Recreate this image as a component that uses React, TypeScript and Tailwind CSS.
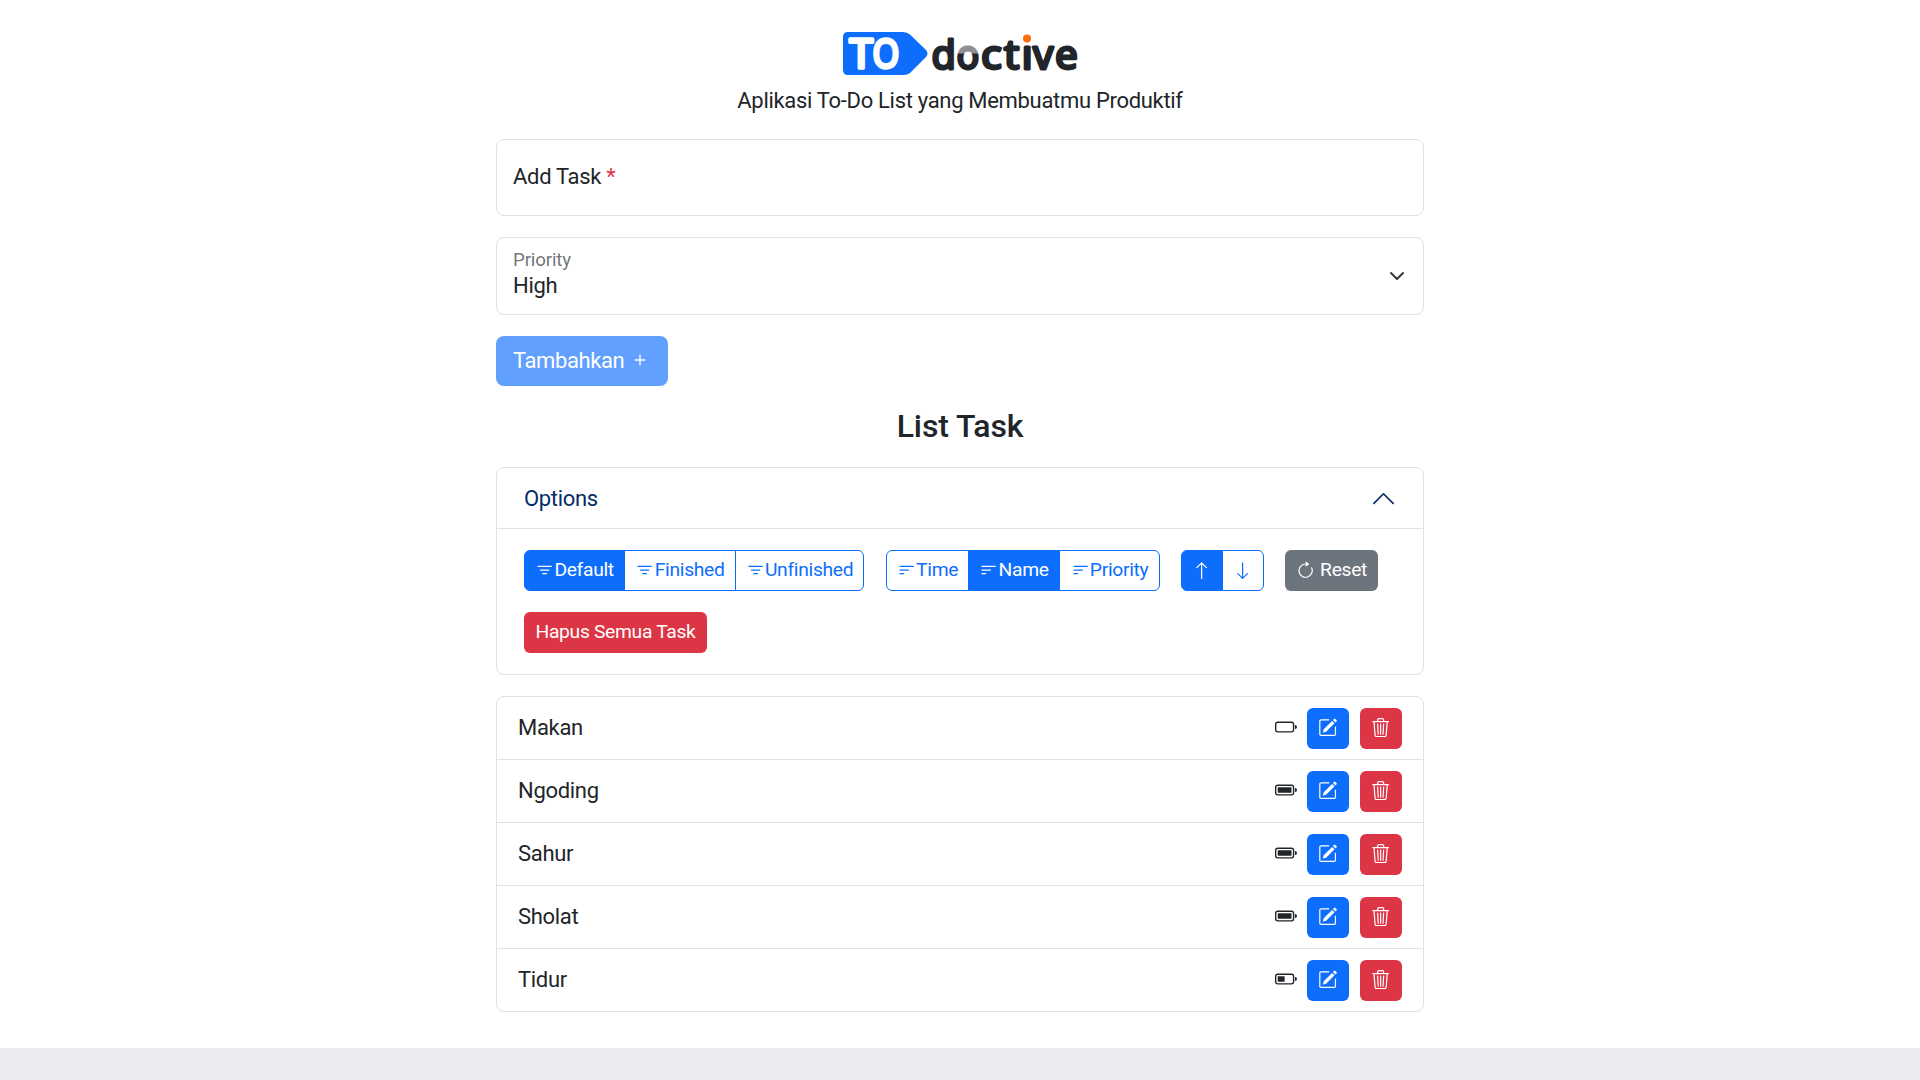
import type { ComponentType, ReactNode } from "react";
import {
  BsArrowClockwise,
  BsArrowDown,
  BsArrowUp,
  BsBattery,
  BsBatteryFull,
  BsBatteryHalf,
  BsFilter,
  BsFilterLeft,
  BsPencilSquare,
  BsPlus,
  BsTrash3,
} from "react-icons/bs";

type Icon = ComponentType<{ className?: string }>;

const tasks: { name: string; battery: Icon }[] = [
  { name: "Makan", battery: BsBattery },
  { name: "Ngoding", battery: BsBatteryFull },
  { name: "Sahur", battery: BsBatteryFull },
  { name: "Sholat", battery: BsBatteryFull },
  { name: "Tidur", battery: BsBatteryHalf },
];

function Logo() {
  return (
    <svg width="236" height="44" viewBox="842 32 236 44" className="block overflow-visible" role="img" aria-label="TOdoctive">
      <defs>
        <linearGradient id="half" gradientUnits="userSpaceOnUse" x1="0" y1="53" x2="0" y2="54">
          <stop offset="0" stopColor="#8d8f91" />
          <stop offset="1" stopColor="#212529" />
        </linearGradient>
      </defs>
      <path
        d="M848 32H903Q907 32 910 34.500L926 50Q929 53.500 926 57L910 73Q907.500 75 904 75H848Q843 75 843 70V37Q843 32 848 32Z"
        fill="#0d6efd"
      />
      <g fontFamily="'Noto Sans', sans-serif" fontWeight="400" strokeLinejoin="round" strokeLinecap="round">
        <g fill="#fff" stroke="#fff" strokeWidth="3.400" fontSize="40.500">
          <text x="849.500" y="68.300" textLength="23" lengthAdjust="spacingAndGlyphs">T</text>
          <text x="872.500" y="68.300" textLength="26.500" lengthAdjust="spacingAndGlyphs">O</text>
        </g>
        <g fill="#212529" stroke="#212529" strokeWidth="2.800" fontSize="39.500">
          <text x="931.500" y="68.500" textLength="24" lengthAdjust="spacingAndGlyphs">d</text>
          <text x="956.500" y="68.500" textLength="22.500" lengthAdjust="spacingAndGlyphs" fill="url(#half)" stroke="url(#half)">o</text>
          <text x="981" y="68.500" textLength="20.500" lengthAdjust="spacingAndGlyphs">c</text>
          <text x="1004" y="68.500" textLength="15" lengthAdjust="spacingAndGlyphs">t</text>
          <text x="1021.500" y="68.500" textLength="11" lengthAdjust="spacingAndGlyphs">ı</text>
          <text x="1033" y="68.500" textLength="20" lengthAdjust="spacingAndGlyphs">v</text>
          <text x="1055" y="68.500" textLength="22.500" lengthAdjust="spacingAndGlyphs">e</text>
        </g>
      </g>
      <circle cx="1027" cy="38.500" r="4" fill="#ff6b0a" />
    </svg>
  );
}

function GroupButton({ active, className, children }: { active?: boolean; className: string; children: ReactNode }) {
  return (
    <button
      className={`-ml-px flex h-[41px] items-center justify-center border border-[#0d6efd] text-[19.25px] tracking-[-0.3px] first:ml-0 first:rounded-l-[6px] last:rounded-r-[6px] ${
        active ? "bg-[#0d6efd] text-white" : "bg-white text-[#0d6efd]"
      } ${className}`}
    >
      {children}
    </button>
  );
}

export default function App() {
  return (
    <div className="flex h-[1080px] flex-col overflow-hidden bg-[#e9ebee] font-['Roboto',sans-serif] text-[22px] leading-[33px] tracking-[-0.31px] text-[#212529]">
      <div className="h-[1048px] bg-white pt-8">
        <main className="mx-auto w-[928px]">
          <header className="flex flex-col items-center">
            <Logo />
            <p className="mt-2">Aplikasi To-Do List yang Membuatmu Produktif</p>
          </header>

          <div className="mt-[22px] flex h-[77px] items-center rounded-[8px] border border-[#dee2e6] px-4 pb-[2px]">
            <span>
              Add Task <span className="text-[#dc3545]">*</span>
            </span>
          </div>

          <div className="mt-[21px] flex h-[78px] items-center justify-between rounded-[8px] border border-[#dee2e6] px-4">
            <div className="mb-[3px]">
              <div className="text-[18.7px] leading-[22px] tracking-[-0.15px] text-[#212529]/65">Priority</div>
              <div className="leading-[30px]">High</div>
            </div>
            <svg viewBox="0 0 16 16" className="mr-[2px] size-4 text-[#343a40]" fill="none" stroke="currentColor" strokeWidth="2" strokeLinecap="round" strokeLinejoin="round">
              <path d="m2 5 6 6 6-6" />
            </svg>
          </div>

          <button className="mt-[21px] flex h-[50px] w-[172px] items-center rounded-[8px] bg-[#61a0fe] pb-[2px] pl-[17px] tracking-[-0.4px] text-white">
            Tambahkan
            <BsPlus className="ml-[5px] size-[22px]" />
          </button>

          <h1 className="mt-[21px] h-[60px] text-center text-[32px] leading-[38px] font-medium tracking-[-0.1px]">List Task</h1>

          <section className="h-[208px] rounded-[8px] border border-[#dee2e6]">
            <div className="flex h-[61px] items-center justify-between border-b border-[#dee2e6] pr-[27px] pl-[27px] text-[#052c65]">
              Options
              <svg viewBox="0 0 16 16" className="-mr-px size-[27px]" fill="none" stroke="currentColor" strokeWidth="1" strokeLinecap="round" strokeLinejoin="round">
                <path d="m2.300 10.900 5.700-5.700 5.700 5.700" />
              </svg>
            </div>
            <div className="flex flex-wrap gap-x-[21px] gap-y-[21px] pt-[21px] pl-[27px]">
              <div className="flex">
                <GroupButton active className="w-[101px]">
                  <BsFilter className="size-[19.25px]" />
                  <span className="pb-[2px]">Default</span>
                </GroupButton>
                <GroupButton className="w-[112px]">
                  <BsFilter className="size-[19.25px]" />
                  <span className="pb-[2px]">Finished</span>
                </GroupButton>
                <GroupButton className="w-[129px]">
                  <BsFilter className="size-[19.25px]" />
                  <span className="pb-[2px]">Unfinished</span>
                </GroupButton>
              </div>
              <div className="ml-[1px] flex">
                <GroupButton className="w-[83px]">
                  <BsFilterLeft className="size-[19.25px]" />
                  <span className="pb-[2px]">Time</span>
                </GroupButton>
                <GroupButton active className="w-[92px]">
                  <BsFilterLeft className="size-[19.25px]" />
                  <span className="pb-[2px]">Name</span>
                </GroupButton>
                <GroupButton className="w-[101px]">
                  <BsFilterLeft className="size-[19.25px]" />
                  <span className="pb-[2px]">Priority</span>
                </GroupButton>
              </div>
              <div className="flex">
                <GroupButton active className="w-[42px]">
                  <BsArrowUp className="size-[19.25px]" />
                </GroupButton>
                <GroupButton className="w-[42px]">
                  <BsArrowDown className="size-[19.25px]" />
                </GroupButton>
              </div>
              <button className="flex h-[41px] w-[93px] items-center justify-center gap-[5px] rounded-[6px] bg-[#6c757d] text-[19.25px] tracking-[-0.3px] text-white">
                <BsArrowClockwise className="size-[19.25px]" />
                <span className="pb-[2px]">Reset</span>
              </button>
              <button className="h-[41px] w-[183px] rounded-[6px] bg-[#dc3545] pb-[2px] text-[19.25px] text-white">
                Hapus Semua Task
              </button>
            </div>
          </section>

          <ul className="mt-[21px] divide-y divide-[#dee2e6] rounded-[8px] border border-[#dee2e6]">
            {tasks.map(({ name, battery: Battery }) => (
              <li key={name} className="flex h-[63px] items-center pr-[21px] pl-[21px] last:h-[62px]">
                <span className="grow pb-[2px]">{name}</span>
                <Battery className="mr-[10px] mb-[3px] size-[22px]" />
                <button className="mr-[11px] flex h-[41px] w-[42px] items-center justify-center rounded-[6px] bg-[#0d6efd] text-white">
                  <BsPencilSquare className="size-[19.25px]" />
                </button>
                <button className="flex h-[41px] w-[42px] items-center justify-center rounded-[6px] bg-[#dc3545] pb-px text-white">
                  <BsTrash3 className="size-[19.25px]" />
                </button>
              </li>
            ))}
          </ul>
        </main>
      </div>
    </div>
  );
}
